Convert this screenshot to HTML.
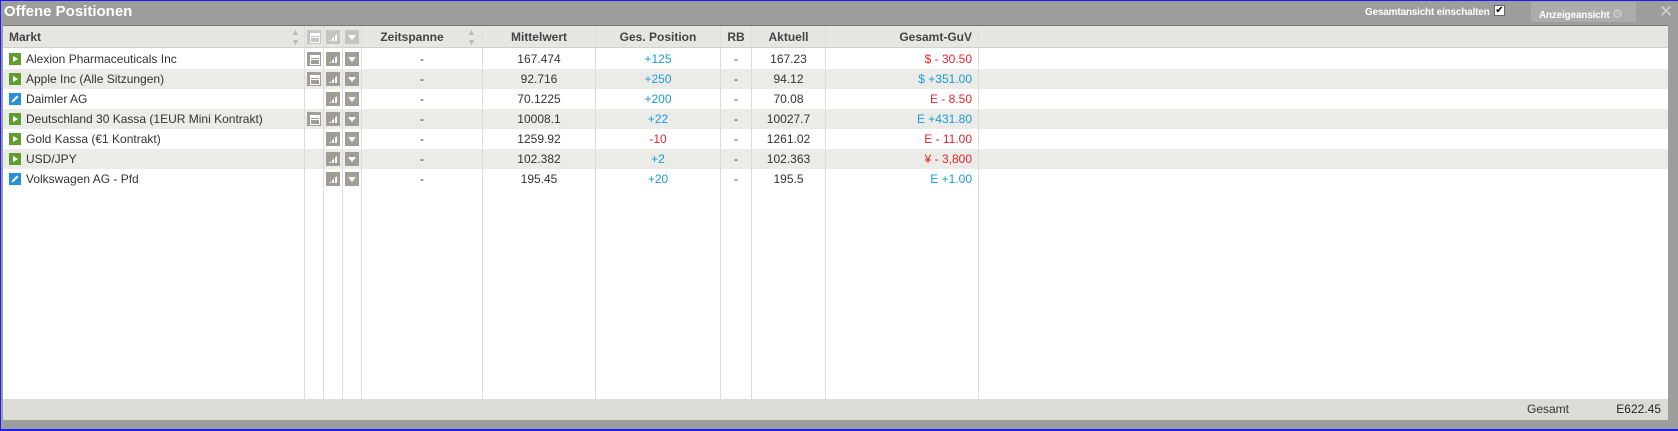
<!DOCTYPE html>
<html><head><meta charset="utf-8"><style>
*{margin:0;padding:0;box-sizing:border-box}
body{width:1678px;height:431px;overflow:hidden;background:#1b1bff;font-family:"Liberation Sans",Arial,sans-serif;font-size:12px;color:#333;position:relative}
#win{position:absolute;left:1px;top:1px;width:1677px;height:428px;background:#9d9e9c}
.title{position:absolute;left:3px;top:2px;color:#fff;font-weight:bold;font-size:15px}
.tr{position:absolute;top:6px;color:#fff;font-weight:bold;font-size:10px;letter-spacing:-0.2px}
#grid{position:absolute;left:2px;top:24px;width:1665px;height:374px;background:#fff;border-top:1px solid #777}
.hdr{position:absolute;left:0;top:0;width:1665px;height:22px;background:#e6e6e2;border-bottom:1px solid #d0d0cc}
.row{position:absolute;left:0;width:1665px;height:20px}
.alt{background:#ebebe7}
.vl{position:absolute;top:0;width:1px;height:374px;background:#dcdcdc}
.c{position:absolute;top:0;line-height:20px;white-space:nowrap}
.h{position:absolute;top:0;line-height:22px;font-weight:bold;color:#444;white-space:nowrap}
.ctr{text-align:center}.rt{text-align:right}
.b{color:#1a9bd7}.r{color:#e0262b}
.ic{position:absolute;width:12px;height:12px;top:4px}
.g{background:#5f9d2e}.g::after{content:"";position:absolute;left:4px;top:3px;border-left:5px solid #fff;border-top:3px solid transparent;border-bottom:3px solid transparent}
.bl{background:#2b8fd6}.bl::after{content:"";position:absolute;left:2px;top:5px;width:8px;height:2px;background:#fff;transform:rotate(-45deg)}
.sq{position:absolute;width:14px;height:14px;top:3px;background:#a09d97}
.sq.n::after{content:"";position:absolute;left:3px;top:3px;width:8px;height:8px;border:1px solid #fff;background:linear-gradient(#fff 2px,transparent 2px,transparent 3px,#fff 3px,#fff 4px,transparent 4px)}
.sq.s::after{content:"";position:absolute;left:3px;bottom:3px;width:8px;height:7px;background:linear-gradient(90deg,#fff 2px,transparent 2px,transparent 3px,#fff 3px,#fff 5px,transparent 5px,transparent 6px,#fff 6px);clip-path:polygon(0 100%,100% 0,100% 100%)}
.sq.d::after{content:"";position:absolute;left:3px;top:5px;border-top:5px solid #fff;border-left:4px solid transparent;border-right:4px solid transparent}
#foot{position:absolute;left:2px;top:398px;width:1665px;height:21px;background:#dcdcd6}
</style></head><body>
<div id="win">
<div class="title">Offene Positionen</div>
<div class="tr" style="left:1364px">Gesamtansicht einschalten</div>
<div style="position:absolute;left:1493px;top:4px;width:11px;height:11px;background:#fff;border:1px solid #666;font-size:10px;line-height:9px;text-align:center;color:#000">✔</div>
<div style="position:absolute;left:1530px;top:1px;width:105px;height:20px;background:#acadab;"></div>
<div class="tr" style="left:1538px">Anzeigeansicht <span style="color:#c9c9c7;font-size:12px">⚙</span></div>
<div style="position:absolute;left:1658px;top:1px;color:#cfcfcd;font-size:17px">✕</div>
<div id="grid">
<div class="hdr"></div>
<div class="row alt" style="top:43px"></div>
<div class="row alt" style="top:83px"></div>
<div class="row alt" style="top:123px"></div>
<div class="vl" style="left:301px"></div><div class="vl" style="left:320px"></div><div class="vl" style="left:339px"></div><div class="vl" style="left:358px"></div><div class="vl" style="left:479px"></div><div class="vl" style="left:592px"></div><div class="vl" style="left:717px"></div><div class="vl" style="left:748px"></div><div class="vl" style="left:822px"></div><div class="vl" style="left:975px"></div>
<div class="h" style="left:6px">Markt</div>
<div class="h" style="left:288px;color:#bbb;font-size:9px;line-height:10px;top:1px">▲<br>▼</div>
<div class="sq n" style="left:304px;top:4px;background:#c4c4c0"></div><div class="sq s" style="left:323px;top:4px;background:#c4c4c0"></div><div class="sq d" style="left:342px;top:4px;background:#c4c4c0"></div>
<div class="h ctr" style="left:359px;width:100px">Zeitspanne</div>
<div class="h" style="left:464px;color:#bbb;font-size:9px;line-height:10px;top:1px">▲<br>▼</div>
<div class="h ctr" style="left:480px;width:112px">Mittelwert</div>
<div class="h ctr" style="left:593px;width:124px">Ges. Position</div>
<div class="h ctr" style="left:718px;width:30px">RB</div>
<div class="h ctr" style="left:749px;width:73px">Aktuell</div>
<div class="h rt" style="left:823px;width:146px">Gesamt-GuV</div>
<div style="position:absolute;left:0;top:23px;width:1000px">
<div class="row" style="top:0"><div class="ic g" style="left:6px"></div><div class="c" style="left:23px">Alexion Pharmaceuticals Inc</div><div class="sq n" style="left:304px"></div><div class="sq s" style="left:323px"></div><div class="sq d" style="left:342px"></div><div class="c ctr" style="left:359px;width:120px">-</div><div class="c ctr" style="left:480px;width:112px">167.474</div><div class="c ctr b" style="left:593px;width:124px">+125</div><div class="c ctr" style="left:718px;width:30px">-</div><div class="c ctr" style="left:749px;width:73px">167.23</div><div class="c rt r" style="left:823px;width:146px">$ - 30.50</div></div>
<div class="row" style="top:20px"><div class="ic g" style="left:6px"></div><div class="c" style="left:23px">Apple Inc (Alle Sitzungen)</div><div class="sq n" style="left:304px"></div><div class="sq s" style="left:323px"></div><div class="sq d" style="left:342px"></div><div class="c ctr" style="left:359px;width:120px">-</div><div class="c ctr" style="left:480px;width:112px">92.716</div><div class="c ctr b" style="left:593px;width:124px">+250</div><div class="c ctr" style="left:718px;width:30px">-</div><div class="c ctr" style="left:749px;width:73px">94.12</div><div class="c rt b" style="left:823px;width:146px">$ +351.00</div></div>
<div class="row" style="top:40px"><div class="ic bl" style="left:6px"></div><div class="c" style="left:23px">Daimler AG</div><div class="sq s" style="left:323px"></div><div class="sq d" style="left:342px"></div><div class="c ctr" style="left:359px;width:120px">-</div><div class="c ctr" style="left:480px;width:112px">70.1225</div><div class="c ctr b" style="left:593px;width:124px">+200</div><div class="c ctr" style="left:718px;width:30px">-</div><div class="c ctr" style="left:749px;width:73px">70.08</div><div class="c rt r" style="left:823px;width:146px">E - 8.50</div></div>
<div class="row" style="top:60px"><div class="ic g" style="left:6px"></div><div class="c" style="left:23px">Deutschland 30 Kassa (1EUR Mini Kontrakt)</div><div class="sq n" style="left:304px"></div><div class="sq s" style="left:323px"></div><div class="sq d" style="left:342px"></div><div class="c ctr" style="left:359px;width:120px">-</div><div class="c ctr" style="left:480px;width:112px">10008.1</div><div class="c ctr b" style="left:593px;width:124px">+22</div><div class="c ctr" style="left:718px;width:30px">-</div><div class="c ctr" style="left:749px;width:73px">10027.7</div><div class="c rt b" style="left:823px;width:146px">E +431.80</div></div>
<div class="row" style="top:80px"><div class="ic g" style="left:6px"></div><div class="c" style="left:23px">Gold Kassa (€1 Kontrakt)</div><div class="sq s" style="left:323px"></div><div class="sq d" style="left:342px"></div><div class="c ctr" style="left:359px;width:120px">-</div><div class="c ctr" style="left:480px;width:112px">1259.92</div><div class="c ctr r" style="left:593px;width:124px">-10</div><div class="c ctr" style="left:718px;width:30px">-</div><div class="c ctr" style="left:749px;width:73px">1261.02</div><div class="c rt r" style="left:823px;width:146px">E - 11.00</div></div>
<div class="row" style="top:100px"><div class="ic g" style="left:6px"></div><div class="c" style="left:23px">USD/JPY</div><div class="sq s" style="left:323px"></div><div class="sq d" style="left:342px"></div><div class="c ctr" style="left:359px;width:120px">-</div><div class="c ctr" style="left:480px;width:112px">102.382</div><div class="c ctr b" style="left:593px;width:124px">+2</div><div class="c ctr" style="left:718px;width:30px">-</div><div class="c ctr" style="left:749px;width:73px">102.363</div><div class="c rt r" style="left:823px;width:146px">¥ - 3,800</div></div>
<div class="row" style="top:120px"><div class="ic bl" style="left:6px"></div><div class="c" style="left:23px">Volkswagen AG - Pfd</div><div class="sq s" style="left:323px"></div><div class="sq d" style="left:342px"></div><div class="c ctr" style="left:359px;width:120px">-</div><div class="c ctr" style="left:480px;width:112px">195.45</div><div class="c ctr b" style="left:593px;width:124px">+20</div><div class="c ctr" style="left:718px;width:30px">-</div><div class="c ctr" style="left:749px;width:73px">195.5</div><div class="c rt b" style="left:823px;width:146px">E +1.00</div></div>
</div>
</div>
<div id="foot"><div class="c" style="left:1524px;line-height:21px">Gesamt</div><div class="c rt" style="left:1580px;width:78px;line-height:21px;color:#222">E622.45</div></div>
</div>
</body></html>
